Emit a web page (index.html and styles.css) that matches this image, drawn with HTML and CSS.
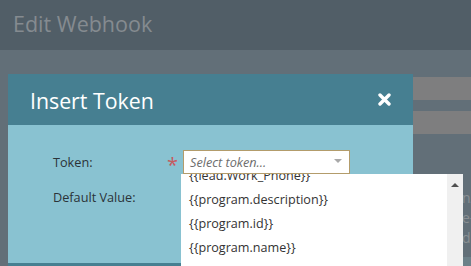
FILE: index.html
```html
<!DOCTYPE html>
<html>
<head>
<meta charset="utf-8">
<link rel="stylesheet" href="styles.css">
</head>
<body>
<div class="topbar"><span class="page-title">Edit Webhook</span></div>
<div class="main">
  <div class="bar"></div>
  <div class="bar"></div>
  <div class="bg-text">
    <div>n/</div>
    <div>e-</div>
    <div>d</div>
  </div>
  <div class="bg-strip"></div>
</div>

<div class="modal">
  <div class="modal-head">
    <span class="modal-title">Insert Token</span>
    <svg class="close" width="13" height="13" viewBox="0 0 13 13">
      <path d="M2 2 L11 11 M11 2 L2 11" stroke="#ffffff" stroke-width="3.4" stroke-linecap="round"/>
    </svg>
  </div>
  <div class="modal-body">
    <div class="form-row">
      <span class="label">Token:</span>
      <span class="req">*</span>
      <div class="select">
        <span class="placeholder">Select token...</span>
        <span class="caret"></span>
      </div>
    </div>
    <div class="form-row">
      <span class="label">Default Value:</span>
    </div>
  </div>
  <div class="modal-foot"></div>
</div>

<div class="dropdown">
  <div class="items">
    <div class="item first">{{lead.Work_Phone}}</div>
    <div class="item">{{program.description}}</div>
    <div class="item">{{program.id}}</div>
    <div class="item">{{program.name}}</div>
  </div>
  <div class="scrollbar"><span class="up"></span></div>
</div>
</body>
</html>
```
FILE: styles.css
```css
html, body {
  margin: 0;
  padding: 0;
}
body {
  width: 471px;
  height: 266px;
  overflow: hidden;
  font-family: "Open Sans", "Liberation Sans", sans-serif;
  background: #626f78;
  position: relative;
}
.topbar {
  height: 50px;
  background: #515e67;
  box-sizing: border-box;
  padding-left: 13px;
  display: flex;
  align-items: center;
}
.page-title {
  font-size: 21.5px;
  color: #858b90;
  line-height: 1;
  margin-top: -2px;
}
.main {
  height: 216px;
  background: #626f78;
  box-sizing: border-box;
  padding-top: 27px;
  display: flex;
  flex-direction: column;
  align-items: flex-end;
}
.bar {
  width: 160px;
  height: 23px;
  background: #7e7e7f;
  margin-bottom: 11px;
}
.bar + .bar {
  height: 24px;
}
.bg-text {
  width: 8px;
  overflow: hidden;
  font-size: 14px;
  line-height: 20px;
  color: #8a8f93;
  margin-top: 43px;
  white-space: nowrap;
}
.bg-text div {
  margin-left: -1px;
}
.bg-strip {
  width: 8px;
  height: 9px;
  background: #6c8088;
  margin-top: 10px;
}

.modal {
  position: absolute;
  left: 8px;
  top: 74px;
  width: 405px;
  height: 200px;
  display: flex;
  flex-direction: column;
}
.modal-head {
  height: 51px;
  background: #467f91;
  display: flex;
  align-items: center;
  justify-content: space-between;
  padding: 0 22px 0 22px;
}
.modal-title {
  color: #ffffff;
  font-size: 21.3px;
  margin-top: 1px;
}
.close {
  display: block;
  margin-top: -1px;
}
.modal-body {
  height: 138px;
  background: #89c2d1;
  box-sizing: border-box;
  padding: 25px 0 0 45px;
  display: flex;
  flex-direction: column;
  gap: 11px;
}
.modal-foot {
  flex: 1;
  background: #467f91;
}
.form-row {
  display: flex;
  align-items: center;
  height: 24px;
}
.label {
  font-size: 12.7px;
  color: #2b3338;
  width: 114px;
}
.req {
  color: #c65a5f;
  font-size: 20px;
  width: 16px;
  line-height: 1;
  margin-top: 6px;
}
.select {
  width: 167px;
  height: 24px;
  box-sizing: border-box;
  border: 1px solid #b39c6b;
  background: #ffffff;
  display: flex;
  align-items: center;
  justify-content: space-between;
  padding: 0 7px 0 6px;
}
.placeholder {
  font-size: 12.7px;
  font-style: italic;
  color: #6d6d6d;
}
.caret {
  width: 0;
  height: 0;
  border-left: 4px solid transparent;
  border-right: 4px solid transparent;
  border-top: 4px solid #a9a9a9;
  margin-top: -2px;
}

.dropdown {
  position: absolute;
  left: 181px;
  top: 174px;
  width: 282px;
  height: 92px;
  background: #ffffff;
  display: flex;
  overflow: hidden;
}
.items {
  flex: 1;
  margin-top: -11px;
}
.item {
  height: 24px;
  line-height: 24px;
  font-size: 12.6px;
  color: #333333;
  padding-left: 8px;
  white-space: nowrap;
}
.item.first {
  height: 25px;
  line-height: 25px;
}
.scrollbar {
  width: 16px;
  background: #f0f0f0;
  display: flex;
  justify-content: center;
  padding-top: 9px;
  box-sizing: border-box;
}
.up {
  width: 0;
  height: 0;
  border-left: 4px solid transparent;
  border-right: 4px solid transparent;
  border-bottom: 4px solid #505050;
}
```
